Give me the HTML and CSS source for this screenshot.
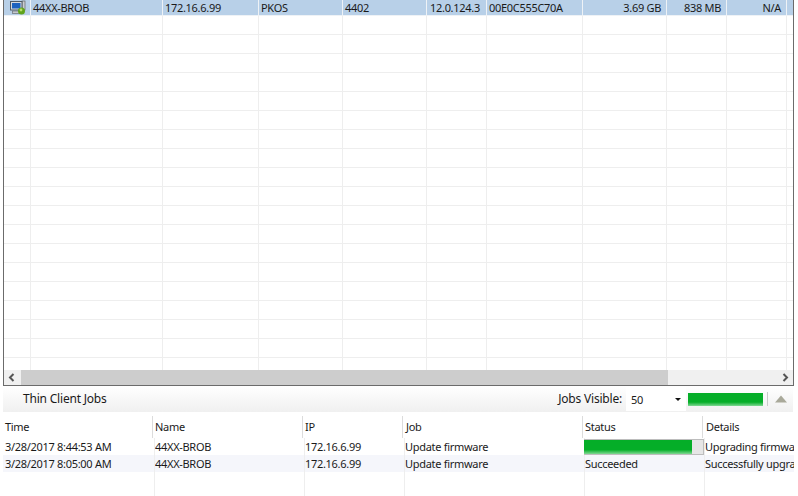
FILE: index.html
```html
<!DOCTYPE html>
<html lang="en">
<head>
<meta charset="utf-8">
<title>Thin Clients</title>
<link rel="stylesheet" href="styles.css">
</head>
<body>
<div class="app">
  <section class="clients">
    <div class="gridwrap">
    <table class="grid">
      <colgroup><col class="c0"><col class="c1"><col class="c2"><col class="c3"><col class="c4"><col class="c5"><col class="c6"><col class="c7"><col class="c8"><col class="c9"><col class="c10"></colgroup>
      <tr class="first">
        <td class="ico"><svg width="16" height="15" viewBox="0 0 16 15"><rect x="12" y="1" width="3" height="9" fill="#c9cdd2" stroke="#666" stroke-width=".7"/><rect x=".5" y="1.500" width="11.500" height="8.500" fill="#d5d9de" stroke="#4f5a66"/><rect x="2" y="3" width="8.500" height="5.500" fill="#1c62c0"/><rect x="2.500" y="11" width="8" height="2.500" fill="#c4c8cc" stroke="#6a6f76" stroke-width=".7"/><circle cx="11.500" cy="11" r="3.500" fill="#5fa31c"/><circle cx="11" cy="10" r="1.400" fill="#b7dd6a"/></svg></td>
        <td>44XX-BROB</td><td>172.16.6.99</td><td>PKOS</td><td>4402</td><td class="ver">12.0.124.3</td><td>00E0C555C70A</td><td class="r">3.69 GB</td><td class="r">838 MB</td><td class="r">N/A</td><td></td>
      </tr>
      <tr><td></td><td></td><td></td><td></td><td></td><td></td><td></td><td></td><td></td><td></td><td></td></tr>
      <tr><td></td><td></td><td></td><td></td><td></td><td></td><td></td><td></td><td></td><td></td><td></td></tr>
      <tr><td></td><td></td><td></td><td></td><td></td><td></td><td></td><td></td><td></td><td></td><td></td></tr>
      <tr><td></td><td></td><td></td><td></td><td></td><td></td><td></td><td></td><td></td><td></td><td></td></tr>
      <tr><td></td><td></td><td></td><td></td><td></td><td></td><td></td><td></td><td></td><td></td><td></td></tr>
      <tr><td></td><td></td><td></td><td></td><td></td><td></td><td></td><td></td><td></td><td></td><td></td></tr>
      <tr><td></td><td></td><td></td><td></td><td></td><td></td><td></td><td></td><td></td><td></td><td></td></tr>
      <tr><td></td><td></td><td></td><td></td><td></td><td></td><td></td><td></td><td></td><td></td><td></td></tr>
      <tr><td></td><td></td><td></td><td></td><td></td><td></td><td></td><td></td><td></td><td></td><td></td></tr>
      <tr><td></td><td></td><td></td><td></td><td></td><td></td><td></td><td></td><td></td><td></td><td></td></tr>
      <tr><td></td><td></td><td></td><td></td><td></td><td></td><td></td><td></td><td></td><td></td><td></td></tr>
      <tr><td></td><td></td><td></td><td></td><td></td><td></td><td></td><td></td><td></td><td></td><td></td></tr>
      <tr><td></td><td></td><td></td><td></td><td></td><td></td><td></td><td></td><td></td><td></td><td></td></tr>
      <tr><td></td><td></td><td></td><td></td><td></td><td></td><td></td><td></td><td></td><td></td><td></td></tr>
      <tr><td></td><td></td><td></td><td></td><td></td><td></td><td></td><td></td><td></td><td></td><td></td></tr>
      <tr><td></td><td></td><td></td><td></td><td></td><td></td><td></td><td></td><td></td><td></td><td></td></tr>
      <tr><td></td><td></td><td></td><td></td><td></td><td></td><td></td><td></td><td></td><td></td><td></td></tr>
      <tr><td></td><td></td><td></td><td></td><td></td><td></td><td></td><td></td><td></td><td></td><td></td></tr>
      <tr><td></td><td></td><td></td><td></td><td></td><td></td><td></td><td></td><td></td><td></td><td></td></tr>
    </table>
    </div>
    <div class="hscroll">
      <svg class="arrow" width="17" height="15" viewBox="0 0 17 15"><path d="M9.500 4 6 7.500l3.500 3.500" fill="none" stroke="#555" stroke-width="2"/></svg>
      <div class="track"><div class="thumb"></div></div>
      <svg class="arrow" width="17" height="15" viewBox="0 0 17 15"><path d="M7.500 4 11 7.500 7.500 11" fill="none" stroke="#555" stroke-width="2"/></svg>
    </div>
  </section>
  <div class="jobbar">
    <span class="jobtitle">Thin Client Jobs</span>
    <span class="vislabel">Jobs Visible:</span>
    <div class="combo"><span>50</span><svg width="6" height="3" viewBox="0 0 6 3"><path d="M0 0h6L3 3z" fill="#111"/></svg></div>
    <div class="barmini"></div>
    <div class="sep"></div>
    <svg class="collapse" width="12" height="8" viewBox="0 0 12 8"><path d="M0 7.500 6 .5l6 7z" fill="#a9a99a"/></svg>
  </div>
  <section class="jobs">
    <div class="jobhead">
      <div class="h">Time</div><div class="h">Name</div><div class="h">IP</div><div class="h wide">Job</div><div class="h">Status</div><div class="h wide">Details</div>
    </div>
    <div class="jobrow">
      <div class="d">3/28/2017 8:44:53 AM</div><div class="d">44XX-BROB</div><div class="d">172.16.6.99</div><div class="d">Update firmware</div><div class="d p"><div class="progress"><div class="fill"></div></div></div><div class="d">Upgrading firmware</div>
    </div>
    <div class="jobrow alt">
      <div class="d">3/28/2017 8:05:00 AM</div><div class="d">44XX-BROB</div><div class="d">172.16.6.99</div><div class="d">Update firmware</div><div class="d">Succeeded</div><div class="d">Successfully upgraded</div>
    </div>
    <div class="jobrow rest">
      <div class="d"></div><div class="d"></div><div class="d"></div><div class="d"></div><div class="d"></div><div class="d"></div>
    </div>
  </section>
</div>
</body>
</html>
```

FILE: styles.css
```css
html, body { margin: 0; padding: 0; background: #fff; }
body { width: 798px; height: 496px; overflow: hidden; font: 11px/15px "Noto Sans", "Open Sans", sans-serif; letter-spacing: -0.3px; color: #1a1a1a; }
.app { display: flex; flex-direction: column; height: 496px; padding-left: 3px; box-sizing: border-box; }
.clients { width: 791px; height: 386px; box-sizing: border-box; border: solid #6b6b6b; border-width: 0 1px 1px 1px; display: flex; flex-direction: column; flex: none; }
.gridwrap { height: 370px; overflow: hidden; flex: none; }
.grid { border-collapse: separate; border-spacing: 0; table-layout: fixed; width: 789px; }
.grid tr { height: 19px; }
.grid tr.first { height: 16px; background: #b8d0e8; }
.grid td { padding: 0 2px; border-right: 1px solid #eeeeee; border-bottom: 1px solid #eeeeee; white-space: nowrap; overflow: hidden; box-sizing: border-box; }
.grid tr.first td { border-right-color: #eef2f6; border-bottom-color: #eef2f6; }
.grid td.r { text-align: right; padding-right: 5px; }
.grid td.ver { padding-left: 3px; }
.grid td.ico { padding: 0 0 0 6px; line-height: 0; }
.grid td:last-child { border-right: 0; }
.c0 { width: 27px; } .c1 { width: 132px; } .c2 { width: 96px; } .c3 { width: 84px; } .c4 { width: 84px; } .c5 { width: 60px; } .c6 { width: 96px; } .c7 { width: 84px; } .c8 { width: 60px; } .c9 { width: 60px; } .c10 { width: 6px; }
.hscroll { height: 15px; display: flex; align-items: center; background: #f0f0f0; flex: none; }
.arrow { flex: none; }
.track { flex: 1; height: 15px; background: #f0f0f0; }
.thumb { width: 647px; height: 15px; background: #cdcdcd; }
.jobbar { height: 26px; width: 790px; display: flex; align-items: center; background: linear-gradient(#ffffff, #f0f0f0); flex: none; }
.jobtitle, .vislabel { font-size: 12px; letter-spacing: -0.2px; margin-bottom: 2px; }
.jobtitle { margin-left: 20px; margin-right: auto; }
.vislabel { margin-right: 4px; }
.combo { width: 60px; height: 24px; background: #fff; display: flex; align-items: center; justify-content: space-between; padding: 0 5px; box-sizing: border-box; }
.barmini { width: 75px; height: 13px; margin-left: 2px; background: linear-gradient(#05ae28 0, #05ae28 70%, #7fd892 100%); }
.sep { width: 1px; height: 14px; margin: 0 7px 0 4px; background: #c9c9c9; }
.collapse { margin-right: 6px; }
.jobs { flex: 1; width: 791px; display: flex; flex-direction: column; }
.jobhead, .jobrow { display: grid; }
.jobhead { height: 22px; margin-top: 4px; grid-template-columns: 150px 150px 100px 180px 120px 91px; }
.jobrow { height: 17px; grid-template-columns: 152px 150px 100px 180px 120px 89px; }
.h { border-right: 1px solid #dcdcdc; padding: 3px 0 0 2px; }
.h.wide { padding-left: 3px; }
.h:last-child { border: 0; }
.alt { background: #f5f6fb; }
.rest { flex: 1; }
.d { border-right: 1px solid #eeeeee; padding: 1px 0 0; white-space: nowrap; overflow: hidden; }
.d:first-child { padding-left: 2px; }
.d:last-child { border: 0; }
.d.p { padding: 1px 0 0; margin-left: -1px; }
.progress { height: 14px; border: solid #bdbdbd; border-width: 1px 1px 1px 0; background: #e6e6e6; }
.fill { width: 108px; height: 14px; background: linear-gradient(#05ae28 0, #05ae28 70%, #7fd892 100%); }
```
